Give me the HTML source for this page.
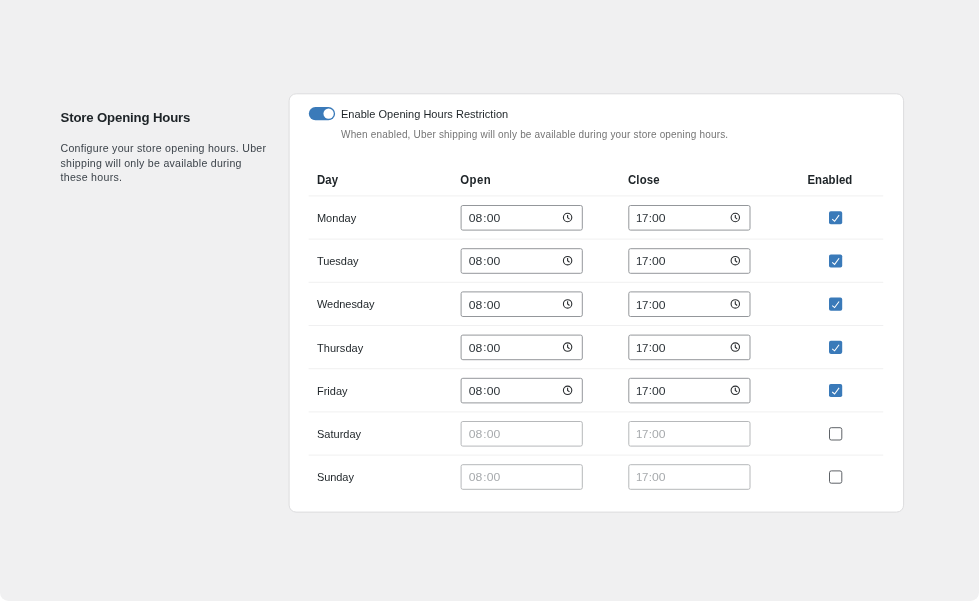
<!DOCTYPE html>
<html><head><meta charset="utf-8"><title>Store Opening Hours</title>
<style>
*{box-sizing:border-box;margin:0;padding:0}
html,body{width:979px;height:601px;overflow:hidden;background:#fff}
.page{position:absolute;left:0;top:0;width:979px;height:601px;background:#f0f0f1;border-radius:0 0 8.5px 8.5px;overflow:hidden}
svg{position:absolute;left:0;top:0;display:block;will-change:transform;opacity:.999;filter:blur(.3px)}
text{font-family:"Liberation Sans",sans-serif;font-size:11px;fill:#1d2327}
.h2{font-size:13.2px;font-weight:700}
.p{font-size:10.6px;fill:#3c434a}
.hint{font-size:10px;fill:#757575}
.th{font-size:11.4px;font-weight:700}
.v{font-size:11.4px;fill:#2c3338}
.vd{font-size:11.4px;fill:#a7aaad}
</style></head><body><div class="page">
<svg width="979" height="601" viewBox="0 0 979 601">
<rect x="289.1" y="93.8" width="614.5" height="418.3" rx="7" fill="#fff" stroke="#dcdcde" stroke-width="1"/>
<text x="60.5" y="122.2" class="h2" textLength="129.9" lengthAdjust="spacing">Store Opening Hours</text>
<text x="60.5" y="151.7" class="p" textLength="205.5" lengthAdjust="spacing">Configure your store opening hours. Uber</text>
<text x="60.5" y="166.6" class="p" textLength="181.0" lengthAdjust="spacing">shipping will only be available during</text>
<text x="60.5" y="181.3" class="p" textLength="61.5" lengthAdjust="spacing">these hours.</text>
<rect x="308.8" y="107" width="26.3" height="13.3" rx="6.65" fill="#3a7ab9"/>
<circle cx="328.6" cy="113.65" r="5.15" fill="#fff"/>
<text x="341.0" y="118.0" textLength="167.2" lengthAdjust="spacing">Enable Opening Hours Restriction</text>
<text x="341.0" y="138.3" class="hint" textLength="387.1" lengthAdjust="spacing">When enabled, Uber shipping will only be available during your store opening hours.</text>
<text transform="translate(316.9 184.0) scale(1 1.04)" class="th" textLength="21.3" lengthAdjust="spacing">Day</text>
<text transform="translate(460.3 184.0) scale(1 1.04)" class="th" textLength="30.3" lengthAdjust="spacing">Open</text>
<text transform="translate(627.9 184.0) scale(1 1.04)" class="th" textLength="31.8" lengthAdjust="spacing">Close</text>
<text transform="translate(807.4 184.0) scale(1 1.04)" class="th" textLength="44.9" lengthAdjust="spacing">Enabled</text>
<rect x="308.6" y="195.4" width="574.7" height="1" fill="#f0f0f1"/>
<text x="316.9" y="222.0" textLength="39.3" lengthAdjust="spacing">Monday</text>
<rect x="461.1" y="205.5" width="121.2" height="24.6" rx="1.7" fill="#fff" stroke="#94979b" stroke-width="1"/>
<text transform="translate(468.8 222.1) scale(1.07 1)" class="v" textLength="12.7" lengthAdjust="spacing">08</text>
<text x="483.2" y="221.5" class="v">:</text>
<text transform="translate(486.7 222.1) scale(1.07 1)" class="v" textLength="12.6" lengthAdjust="spacing">00</text>
<g fill="none" stroke="#2a2d30" stroke-width="1.1"><circle cx="567.6" cy="217.5" r="4.2"/><path d="M567.6 214.9V217.6l1.9 1.5"/></g>
<rect x="628.8" y="205.5" width="121.2" height="24.6" rx="1.7" fill="#fff" stroke="#94979b" stroke-width="1"/>
<text transform="translate(635.9 222.1) scale(1.0 1)" class="v" textLength="12.4" lengthAdjust="spacing">17</text>
<text x="648.8" y="221.5" class="v">:</text>
<text transform="translate(652.0 222.1) scale(1.07 1)" class="v" textLength="12.6" lengthAdjust="spacing">00</text>
<g fill="none" stroke="#2a2d30" stroke-width="1.1"><circle cx="735.3" cy="217.5" r="4.2"/><path d="M735.3 214.9V217.6l1.9 1.5"/></g>
<rect x="829" y="211.2" width="13.2" height="13.1" rx="1.8" fill="#3a7ab9"/>
<path d="M832.2 219.2l2.4 2 4.5-6.1" fill="none" stroke="#fff" stroke-width="1.05"/>
<rect x="308.6" y="238.6" width="574.7" height="1" fill="#f0f0f1"/>
<text x="316.9" y="265.2" textLength="41.6" lengthAdjust="spacing">Tuesday</text>
<rect x="461.1" y="248.7" width="121.2" height="24.6" rx="1.7" fill="#fff" stroke="#94979b" stroke-width="1"/>
<text transform="translate(468.8 265.3) scale(1.07 1)" class="v" textLength="12.7" lengthAdjust="spacing">08</text>
<text x="483.2" y="264.7" class="v">:</text>
<text transform="translate(486.7 265.3) scale(1.07 1)" class="v" textLength="12.6" lengthAdjust="spacing">00</text>
<g fill="none" stroke="#2a2d30" stroke-width="1.1"><circle cx="567.6" cy="260.7" r="4.2"/><path d="M567.6 258.1V260.8l1.9 1.5"/></g>
<rect x="628.8" y="248.7" width="121.2" height="24.6" rx="1.7" fill="#fff" stroke="#94979b" stroke-width="1"/>
<text transform="translate(635.9 265.3) scale(1.0 1)" class="v" textLength="12.4" lengthAdjust="spacing">17</text>
<text x="648.8" y="264.7" class="v">:</text>
<text transform="translate(652.0 265.3) scale(1.07 1)" class="v" textLength="12.6" lengthAdjust="spacing">00</text>
<g fill="none" stroke="#2a2d30" stroke-width="1.1"><circle cx="735.3" cy="260.7" r="4.2"/><path d="M735.3 258.1V260.8l1.9 1.5"/></g>
<rect x="829" y="254.4" width="13.2" height="13.1" rx="1.8" fill="#3a7ab9"/>
<path d="M832.2 262.4l2.4 2 4.5-6.1" fill="none" stroke="#fff" stroke-width="1.05"/>
<rect x="308.6" y="281.8" width="574.7" height="1" fill="#f0f0f1"/>
<text x="316.9" y="308.4" textLength="57.6" lengthAdjust="spacing">Wednesday</text>
<rect x="461.1" y="291.9" width="121.2" height="24.6" rx="1.7" fill="#fff" stroke="#94979b" stroke-width="1"/>
<text transform="translate(468.8 308.5) scale(1.07 1)" class="v" textLength="12.7" lengthAdjust="spacing">08</text>
<text x="483.2" y="307.9" class="v">:</text>
<text transform="translate(486.7 308.5) scale(1.07 1)" class="v" textLength="12.6" lengthAdjust="spacing">00</text>
<g fill="none" stroke="#2a2d30" stroke-width="1.1"><circle cx="567.6" cy="303.9" r="4.2"/><path d="M567.6 301.3V304.0l1.9 1.5"/></g>
<rect x="628.8" y="291.9" width="121.2" height="24.6" rx="1.7" fill="#fff" stroke="#94979b" stroke-width="1"/>
<text transform="translate(635.9 308.5) scale(1.0 1)" class="v" textLength="12.4" lengthAdjust="spacing">17</text>
<text x="648.8" y="307.9" class="v">:</text>
<text transform="translate(652.0 308.5) scale(1.07 1)" class="v" textLength="12.6" lengthAdjust="spacing">00</text>
<g fill="none" stroke="#2a2d30" stroke-width="1.1"><circle cx="735.3" cy="303.9" r="4.2"/><path d="M735.3 301.3V304.0l1.9 1.5"/></g>
<rect x="829" y="297.6" width="13.2" height="13.1" rx="1.8" fill="#3a7ab9"/>
<path d="M832.2 305.6l2.4 2 4.5-6.1" fill="none" stroke="#fff" stroke-width="1.05"/>
<rect x="308.6" y="325.0" width="574.7" height="1" fill="#f0f0f1"/>
<text x="316.9" y="351.6" textLength="46.4" lengthAdjust="spacing">Thursday</text>
<rect x="461.1" y="335.1" width="121.2" height="24.6" rx="1.7" fill="#fff" stroke="#94979b" stroke-width="1"/>
<text transform="translate(468.8 351.7) scale(1.07 1)" class="v" textLength="12.7" lengthAdjust="spacing">08</text>
<text x="483.2" y="351.1" class="v">:</text>
<text transform="translate(486.7 351.7) scale(1.07 1)" class="v" textLength="12.6" lengthAdjust="spacing">00</text>
<g fill="none" stroke="#2a2d30" stroke-width="1.1"><circle cx="567.6" cy="347.1" r="4.2"/><path d="M567.6 344.5V347.2l1.9 1.5"/></g>
<rect x="628.8" y="335.1" width="121.2" height="24.6" rx="1.7" fill="#fff" stroke="#94979b" stroke-width="1"/>
<text transform="translate(635.9 351.7) scale(1.0 1)" class="v" textLength="12.4" lengthAdjust="spacing">17</text>
<text x="648.8" y="351.1" class="v">:</text>
<text transform="translate(652.0 351.7) scale(1.07 1)" class="v" textLength="12.6" lengthAdjust="spacing">00</text>
<g fill="none" stroke="#2a2d30" stroke-width="1.1"><circle cx="735.3" cy="347.1" r="4.2"/><path d="M735.3 344.5V347.2l1.9 1.5"/></g>
<rect x="829" y="340.8" width="13.2" height="13.1" rx="1.8" fill="#3a7ab9"/>
<path d="M832.2 348.8l2.4 2 4.5-6.1" fill="none" stroke="#fff" stroke-width="1.05"/>
<rect x="308.6" y="368.2" width="574.7" height="1" fill="#f0f0f1"/>
<text x="316.9" y="394.8" textLength="30.6" lengthAdjust="spacing">Friday</text>
<rect x="461.1" y="378.3" width="121.2" height="24.6" rx="1.7" fill="#fff" stroke="#94979b" stroke-width="1"/>
<text transform="translate(468.8 394.9) scale(1.07 1)" class="v" textLength="12.7" lengthAdjust="spacing">08</text>
<text x="483.2" y="394.3" class="v">:</text>
<text transform="translate(486.7 394.9) scale(1.07 1)" class="v" textLength="12.6" lengthAdjust="spacing">00</text>
<g fill="none" stroke="#2a2d30" stroke-width="1.1"><circle cx="567.6" cy="390.3" r="4.2"/><path d="M567.6 387.7V390.4l1.9 1.5"/></g>
<rect x="628.8" y="378.3" width="121.2" height="24.6" rx="1.7" fill="#fff" stroke="#94979b" stroke-width="1"/>
<text transform="translate(635.9 394.9) scale(1.0 1)" class="v" textLength="12.4" lengthAdjust="spacing">17</text>
<text x="648.8" y="394.3" class="v">:</text>
<text transform="translate(652.0 394.9) scale(1.07 1)" class="v" textLength="12.6" lengthAdjust="spacing">00</text>
<g fill="none" stroke="#2a2d30" stroke-width="1.1"><circle cx="735.3" cy="390.3" r="4.2"/><path d="M735.3 387.7V390.4l1.9 1.5"/></g>
<rect x="829" y="384.0" width="13.2" height="13.1" rx="1.8" fill="#3a7ab9"/>
<path d="M832.2 392.0l2.4 2 4.5-6.1" fill="none" stroke="#fff" stroke-width="1.05"/>
<rect x="308.6" y="411.4" width="574.7" height="1" fill="#f0f0f1"/>
<text x="316.9" y="438.0" textLength="44.2" lengthAdjust="spacing">Saturday</text>
<rect x="461.1" y="421.5" width="121.2" height="24.6" rx="1.7" fill="#fff" stroke="#b6b8ba" stroke-width="1"/>
<text transform="translate(468.8 438.1) scale(1.07 1)" class="vd" textLength="12.7" lengthAdjust="spacing">08</text>
<text x="483.2" y="437.5" class="vd">:</text>
<text transform="translate(486.7 438.1) scale(1.07 1)" class="vd" textLength="12.6" lengthAdjust="spacing">00</text>
<rect x="628.8" y="421.5" width="121.2" height="24.6" rx="1.7" fill="#fff" stroke="#b6b8ba" stroke-width="1"/>
<text transform="translate(635.9 438.1) scale(1.0 1)" class="vd" textLength="12.4" lengthAdjust="spacing">17</text>
<text x="648.8" y="437.5" class="vd">:</text>
<text transform="translate(652.0 438.1) scale(1.07 1)" class="vd" textLength="12.6" lengthAdjust="spacing">00</text>
<rect x="829.5" y="427.7" width="12.3" height="12.3" rx="1.8" fill="#fff" stroke="#5e6267" stroke-width="1"/>
<rect x="308.6" y="454.6" width="574.7" height="1" fill="#f0f0f1"/>
<text x="316.9" y="481.2" textLength="37.0" lengthAdjust="spacing">Sunday</text>
<rect x="461.1" y="464.7" width="121.2" height="24.6" rx="1.7" fill="#fff" stroke="#b6b8ba" stroke-width="1"/>
<text transform="translate(468.8 481.3) scale(1.07 1)" class="vd" textLength="12.7" lengthAdjust="spacing">08</text>
<text x="483.2" y="480.7" class="vd">:</text>
<text transform="translate(486.7 481.3) scale(1.07 1)" class="vd" textLength="12.6" lengthAdjust="spacing">00</text>
<rect x="628.8" y="464.7" width="121.2" height="24.6" rx="1.7" fill="#fff" stroke="#b6b8ba" stroke-width="1"/>
<text transform="translate(635.9 481.3) scale(1.0 1)" class="vd" textLength="12.4" lengthAdjust="spacing">17</text>
<text x="648.8" y="480.7" class="vd">:</text>
<text transform="translate(652.0 481.3) scale(1.07 1)" class="vd" textLength="12.6" lengthAdjust="spacing">00</text>
<rect x="829.5" y="470.9" width="12.3" height="12.3" rx="1.8" fill="#fff" stroke="#5e6267" stroke-width="1"/>
</svg></div></body></html>
